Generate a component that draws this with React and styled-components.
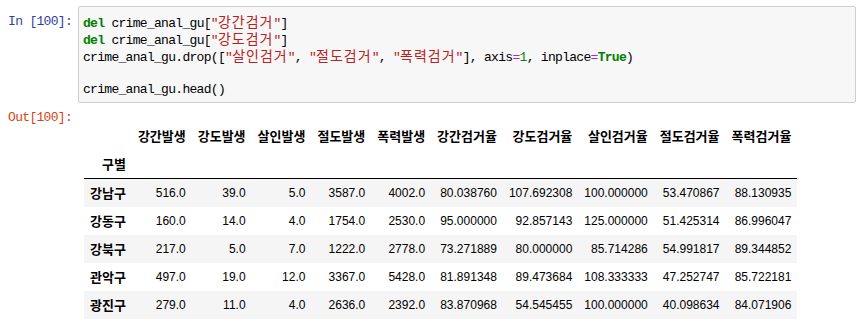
import React from 'react';
import styled, { createGlobalStyle } from 'styled-components';

const GlobalStyle = createGlobalStyle`
  body {
    margin: 0;
    background: #ffffff;
  }
`;

const MONO = `'Liberation Mono', 'Noto Sans CJK KR', monospace`;

const Notebook = styled.div`
  padding: 6px 7px 0 0;
`;

const Row = styled.div`
  display: flex;
  align-items: flex-start;
  gap: 6px;
  margin-top: ${({ $top }) => $top || 0}px;
`;

const Prompt = styled.div`
  flex: none;
  width: 72px;
  padding-top: ${({ $pad }) => $pad || 0}px;
  text-align: right;
  font-family: ${MONO};
  font-size: 13px;
  letter-spacing: -0.7px;
  line-height: 17px;
  white-space: pre;
  color: ${({ $color }) => $color};
`;

const InputArea = styled.div`
  flex: 1;
  background: #f7f7f7;
  border: 1px solid #cfcfcf;
  border-radius: 2px;
  padding: 6px 4px 4px;
`;

const CodeLine = styled.div`
  height: 17px;
  font-family: ${MONO};
  font-size: 13px;
  letter-spacing: -0.7px;
  line-height: 17px;
  white-space: pre;
  color: #000000;
`;

const Keyword = styled.span`
  color: #008000;
  font-weight: bold;
`;

const Str = styled.span`
  color: #ba2121;
`;

const Hangul = styled.span`
  font-family: 'Noto Sans CJK KR', sans-serif;
  font-size: 14px;
  letter-spacing: 1px;
`;

const Op = styled.span`
  color: #aa22ff;
`;

const Num = styled.span`
  color: #008800;
`;

const OutputArea = styled.div`
  flex: 1;
  padding: 13px 6px 0;
`;

const Table = styled.table`
  border-collapse: collapse;
  border-spacing: 0;
  font-family: 'Liberation Sans', 'Noto Sans CJK KR', sans-serif;
  font-size: 12px;
  color: #000000;
`;

const Head = styled.thead`
  border-bottom: 1px solid #000000;
`;

const Body = styled.tbody`
  tr:nth-child(odd) {
    background: #f5f5f5;
  }
`;

const Th = styled.th`
  padding: 6px;
  line-height: 16px;
  height: 16px;
  text-align: right;
  font-weight: bold;
  font-size: 13px;
  white-space: nowrap;
  font-family: 'Noto Sans CJK KR', 'Liberation Sans', sans-serif;
`;

const Td = styled.td`
  padding: 6px;
  line-height: 16px;
  height: 16px;
  text-align: right;
  white-space: nowrap;
`;

const KStr = ({ children }) => (
  <Str>"<Hangul>{children}</Hangul>"</Str>
);

const columns = ['강간발생', '강도발생', '살인발생', '절도발생', '폭력발생', '강간검거율', '강도검거율', '살인검거율', '절도검거율', '폭력검거율'];

const rows = [
  ['강남구', '516.0', '39.0', '5.0', '3587.0', '4002.0', '80.038760', '107.692308', '100.000000', '53.470867', '88.130935'],
  ['강동구', '160.0', '14.0', '4.0', '1754.0', '2530.0', '95.000000', '92.857143', '125.000000', '51.425314', '86.996047'],
  ['강북구', '217.0', '5.0', '7.0', '1222.0', '2778.0', '73.271889', '80.000000', '85.714286', '54.991817', '89.344852'],
  ['관악구', '497.0', '19.0', '12.0', '3367.0', '5428.0', '81.891348', '89.473684', '108.333333', '47.252747', '85.722181'],
  ['광진구', '279.0', '11.0', '4.0', '2636.0', '2392.0', '83.870968', '54.545455', '100.000000', '40.098634', '84.071906'],
];

export default function App() {
  return (
    <Notebook>
      <GlobalStyle />
      <Row>
        <Prompt $color="#303f9f" $pad={7}>In [100]:</Prompt>
        <InputArea>
          <CodeLine><Keyword>del</Keyword> crime_anal_gu[<KStr>강간검거</KStr>]</CodeLine>
          <CodeLine><Keyword>del</Keyword> crime_anal_gu[<KStr>강도검거</KStr>]</CodeLine>
          <CodeLine>
            crime_anal_gu.drop([<KStr>살인검거</KStr>, <KStr>절도검거</KStr>, <KStr>폭력검거</KStr>], axis<Op>=</Op><Num>1</Num>, inplace<Op>=</Op><Keyword>True</Keyword>)
          </CodeLine>
          <CodeLine> </CodeLine>
          <CodeLine>crime_anal_gu.head()</CodeLine>
        </InputArea>
      </Row>
      <Row $top={6}>
        <Prompt $color="#d84315">Out[100]:</Prompt>
        <OutputArea>
          <Table>
            <Head>
              <tr>
                <Th />
                {columns.map((c) => <Th key={c}>{c}</Th>)}
              </tr>
              <tr>
                <Th>구별</Th>
                {columns.map((c) => <Th key={c} />)}
              </tr>
            </Head>
            <Body>
              {rows.map(([name, ...vals]) => (
                <tr key={name}>
                  <Th>{name}</Th>
                  {vals.map((v, i) => <Td key={i}>{v}</Td>)}
                </tr>
              ))}
            </Body>
          </Table>
        </OutputArea>
      </Row>
    </Notebook>
  );
}
